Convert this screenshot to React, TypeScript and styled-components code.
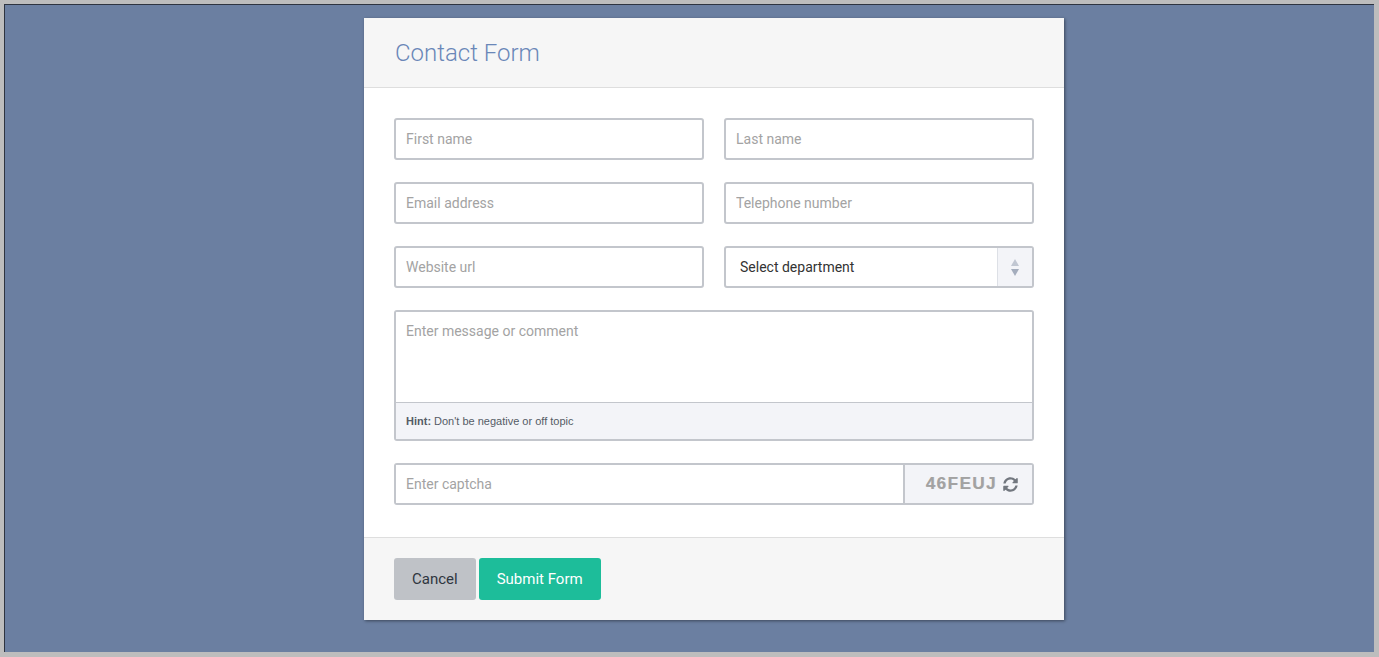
import React from "react";
import styled, { createGlobalStyle } from "styled-components";
import { FaSyncAlt } from "react-icons/fa";

const Global = createGlobalStyle`
  html, body { margin: 0; padding: 0; }
  body { font-family: Roboto, "Liberation Sans", Arial, sans-serif; }
  * { box-sizing: border-box; }
`;

const Frame = styled.div`
  width: 1379px;
  height: 657px;
  border-style: solid;
  border-color: #bdbdbd;
  border-width: 4px 5px 5px 4px;
  background: #6b7fa1;
  box-shadow: inset 1px 1px 0 #2e3440;
  padding-top: 14px;
  display: flex;
  justify-content: center;
  overflow: hidden;
`;

const Card = styled.div`
  width: 700px;
  align-self: flex-start;
  margin-left: 50px;
  background: #fff;
  box-shadow: 1px 1px 3px rgba(0, 0, 0, 0.45);
  display: flex;
  flex-direction: column;
`;

const Header = styled.div`
  height: 70px;
  background: #f6f6f6;
  border-bottom: 1px solid #dedede;
  padding: 0 30px;
  display: flex;
  align-items: center;
`;

const Title = styled.h2`
  margin: 0;
  font-family: Roboto, sans-serif;
  font-weight: 300;
  font-size: 24px;
  color: #6a87b8;
  padding-left: 1px;
`;

const Body = styled.div`
  padding: 30px 30px 10px;
  display: flex;
  flex-direction: column;
`;

const Row = styled.div`
  display: grid;
  grid-template-columns: 310px 310px;
  gap: 20px;
  margin-bottom: 22px;
`;

const FullRow = styled.div`
  margin-bottom: 22px;
`;

const Input = styled.input`
  width: 100%;
  height: 42px;
  border: 2px solid #c3c6cc;
  border-radius: 3px;
  padding: 0 10px;
  font-family: Roboto, sans-serif;
  font-size: 14px;
  color: #333;
  outline: none;
  background: #fff;
  &::placeholder { color: #a3a3a3; }
`;

const SelectBox = styled.div`
  height: 42px;
  border: 2px solid #c3c6cc;
  border-radius: 3px;
  display: flex;
  align-items: stretch;
  background: #fff;
`;

const SelectText = styled.div`
  flex: 1;
  display: flex;
  align-items: center;
  padding-left: 14px;
  font-size: 14px;
  color: #333;
`;

const ArrowBox = styled.div`
  width: 35px;
  background: #f3f4f8;
  border-left: 1px solid #dde0e6;
  display: flex;
  flex-direction: column;
  align-items: center;
  justify-content: center;
  gap: 3px;
`;

const Tri = styled.span<{ $down?: boolean }>`
  width: 0;
  height: 0;
  border-left: 4px solid transparent;
  border-right: 4px solid transparent;
  ${(p) =>
    p.$down
      ? "border-top: 7px solid #a4adbd;"
      : "border-bottom: 7px solid #c1c7d2;"}
`;

const TextAreaWrap = styled.div`
  border: 2px solid #c3c6cc;
  border-radius: 3px;
  overflow: hidden;
`;

const TextArea = styled.textarea`
  display: block;
  width: 100%;
  height: 90px;
  border: none;
  resize: none;
  padding: 11px 10px;
  font-family: Roboto, sans-serif;
  font-size: 14px;
  outline: none;
  &::placeholder { color: #a3a3a3; }
`;

const Hint = styled.div`
  height: 37px;
  border-top: 1px solid #c3c6cc;
  background: #f3f4f8;
  padding: 0 10px;
  display: flex;
  align-items: center;
  font-family: "Liberation Sans", Arial, sans-serif;
  font-size: 11px;
  color: #555c66;
  b { font-weight: bold; margin-right: 3px; }
`;

const CaptchaRow = styled.div`
  display: flex;
  height: 42px;
  border: 2px solid #c3c6cc;
  border-radius: 3px;
  margin-bottom: 22px;
`;

const CaptchaInput = styled.input`
  flex: 1;
  border: none;
  padding: 0 10px;
  font-family: Roboto, sans-serif;
  font-size: 14px;
  outline: none;
  &::placeholder { color: #a3a3a3; }
`;

const CaptchaBox = styled.div`
  width: 129px;
  background: #f3f4f8;
  border-left: 2px solid #c3c6cc;
  display: flex;
  align-items: center;
  justify-content: flex-end;
  padding-right: 14px;
  gap: 6px;
`;

const CaptchaText = styled.span`
  font-family: "Liberation Sans", Arial, sans-serif;
  font-weight: bold;
  font-size: 17px;
  letter-spacing: 1.5px;
  color: #a2a2a2;
  text-shadow: 0.5px 0 0 #c8c8c8;
`;

const Footer = styled.div`
  background: #f6f6f6;
  border-top: 1px solid #dedede;
  padding: 20px 30px 20px;
  display: flex;
  gap: 3px;
`;

const Button = styled.button<{ $primary?: boolean }>`
  height: 42px;
  border: none;
  border-radius: 3px;
  padding: 0 18px;
  font-family: Roboto, sans-serif;
  font-size: 15px;
  cursor: pointer;
  background: ${(p) => (p.$primary ? "#1dbd9a" : "#bfc2c7")};
  color: ${(p) => (p.$primary ? "#fff" : "#2f3640")};
`;

export default function App() {
  return (
    <>
      <Global />
      <Frame>
        <Card>
          <Header>
            <Title>Contact Form</Title>
          </Header>
          <Body>
            <Row>
              <Input placeholder="First name" />
              <Input placeholder="Last name" />
            </Row>
            <Row>
              <Input placeholder="Email address" />
              <Input placeholder="Telephone number" />
            </Row>
            <Row>
              <Input placeholder="Website url" />
              <SelectBox>
                <SelectText>Select department</SelectText>
                <ArrowBox>
                  <Tri />
                  <Tri $down />
                </ArrowBox>
              </SelectBox>
            </Row>
            <FullRow>
              <TextAreaWrap>
                <TextArea placeholder="Enter message or comment" />
                <Hint>
                  <b>Hint:</b> Don't be negative or off topic
                </Hint>
              </TextAreaWrap>
            </FullRow>
            <CaptchaRow>
              <CaptchaInput placeholder="Enter captcha" />
              <CaptchaBox>
                <CaptchaText>46FEUJ</CaptchaText>
                <FaSyncAlt size={15} color="#72777f" />
              </CaptchaBox>
            </CaptchaRow>
          </Body>
          <Footer>
            <Button>Cancel</Button>
            <Button $primary>Submit Form</Button>
          </Footer>
        </Card>
      </Frame>
    </>
  );
}
